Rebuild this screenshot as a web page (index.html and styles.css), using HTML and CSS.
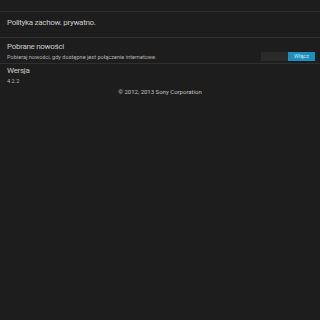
FILE: index.html
```html
<!DOCTYPE html>
<html lang="pl">
<head>
<meta charset="utf-8">
<link rel="stylesheet" href="styles.css">
</head>
<body>
<div class="list">
  <div class="row row-top"></div>
  <div class="row row-single">
    <div class="title">Polityka zachow. prywatno.</div>
  </div>
  <div class="row row-double">
    <div class="texts">
      <div class="title">Pobrane nowości</div>
      <div class="sub">Pobieraj nowości, gdy dostępne jest połączenie internetowe.</div>
    </div>
    <div class="switch"><span class="off"></span><span class="on">Włącz</span></div>
  </div>
  <div class="row row-version">
    <div class="title">Wersja</div>
    <div class="sub">4.2.2</div>
  </div>
  <div class="copy">© 2012, 2013 Sony Corporation</div>
</div>
</body>
</html>
```
FILE: styles.css
```css
html, body {
  margin: 0;
  padding: 0;
  background: #1d1d1d;
  width: 320px;
  height: 320px;
  overflow: hidden;
  font-family: Roboto, "Liberation Sans", sans-serif;
  color: #d6d6d6;
}
.list {
  display: flex;
  flex-direction: column;
}
.row {
  border-bottom: 1px solid #2f2f2f;
  padding: 0 7px;
}
.row-top {
  height: 11px;
}
.row-single {
  height: 26px;
  display: flex;
  align-items: center;
  box-sizing: border-box;
  padding-bottom: 3px;
}
.title {
  font-size: 8px;
  line-height: 10px;
  letter-spacing: -0.3px;
  color: #cacaca;
}
.row-double {
  height: 25px;
  display: flex;
  justify-content: space-between;
  align-items: flex-start;
  padding-right: 5px;
}
.texts {
  display: flex;
  flex-direction: column;
  gap: 2px;
  padding-top: 4px;
}
.sub {
  font-size: 5.6px;
  line-height: 7px;
  color: #b4b4b4;
}
.switch {
  display: flex;
  height: 9px;
  margin-top: 14px;
}
.switch .off {
  width: 27px;
  background: #2a2a2a;
}
.switch .on {
  width: 27px;
  background: #1c8fbf;
  color: #cfe6f0;
  font-size: 5.5px;
  line-height: 9px;
  text-align: center;
}
.row-version {
  border-bottom: none;
  padding-top: 2px;
  display: flex;
  flex-direction: column;
  gap: 2px;
}
.copy {
  text-align: center;
  font-size: 6px;
  line-height: 8px;
  color: #c0c0c0;
  margin-top: 3px;
}
```
